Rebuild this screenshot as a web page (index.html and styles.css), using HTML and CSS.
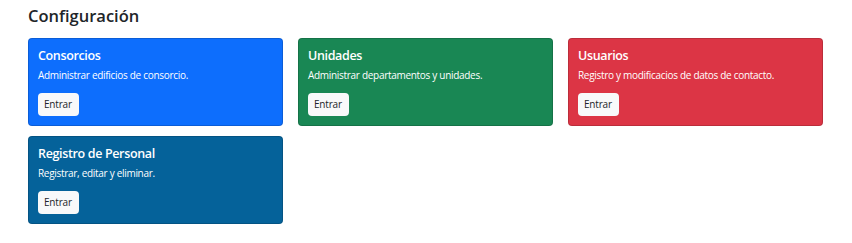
FILE: index.html
```html
<!DOCTYPE html>
<html lang="es">
  <head>
    <meta charset="UTF-8" />
    <meta name="viewport" content="width=device-width, initial-scale=1.0" />
    <title>Configuración</title>
    <link rel="stylesheet" href="styles.css">
  </head>
  <body>
    <div class="container">
      <h3 class="page-title">Configuración</h3>
      <div class="cards">
        <div class="card blue">
          <h5 class="card-title">Consorcios</h5>
          <p class="card-text">Administrar edificios de consorcio.</p>
          <a href="#" class="btn">Entrar</a>
        </div>
        <div class="card green">
          <h5 class="card-title">Unidades</h5>
          <p class="card-text">Administrar departamentos y unidades.</p>
          <a href="#" class="btn">Entrar</a>
        </div>
        <div class="card red">
          <h5 class="card-title">Usuarios</h5>
          <p class="card-text">Registro y modificacios de datos de contacto.</p>
          <a href="#" class="btn">Entrar</a>
        </div>
        <div class="card navy">
          <h5 class="card-title">Registro de Personal</h5>
          <p class="card-text">Registrar, editar y eliminar.</p>
          <a href="#" class="btn">Entrar</a>
        </div>
      </div>
    </div>
  </body>
</html>
```

FILE: styles.css
```css
* {
  margin: 0;
  padding: 0;
  box-sizing: border-box;
}
body {
  font-family: "Open Sans", "Noto Sans", sans-serif;
  color: #212529;
  background: #fff;
}

.container {
  padding: 4px 28px 0;
}

.page-title {
  font-size: 16.5px;
  font-weight: 600;
  line-height: 24px;
  margin-bottom: 10px;
}

.cards {
  display: grid;
  grid-template-columns: repeat(3, 255px);
  column-gap: 15px;
  row-gap: 10px;
}

.card {
  height: 88px;
  border: 1px solid rgba(0, 0, 0, 0.15);
  border-radius: 4px;
  padding: 8px 9px;
  color: #fff;
}
.card.blue {
  background-color: #0d6efd;
}
.card.green {
  background-color: #198754;
}
.card.red {
  background-color: #dc3545;
}
.card.navy {
  background-color: #05629a;
}

.card-title {
  font-size: 12.5px;
  font-weight: 600;
  line-height: 17px;
  letter-spacing: -0.35px;
  margin-bottom: 4px;
}
.card-text {
  font-size: 10px;
  line-height: 15px;
  letter-spacing: -0.3px;
  margin-bottom: 8px;
}

.btn {
  display: inline-block;
  height: 23px;
  line-height: 23px;
  padding: 0 7px 0 6px;
  font-size: 10px;
  letter-spacing: -0.2px;
  color: #212529;
  background-color: #f8f9fa;
  border-radius: 4px;
  text-decoration: none;
}
```
